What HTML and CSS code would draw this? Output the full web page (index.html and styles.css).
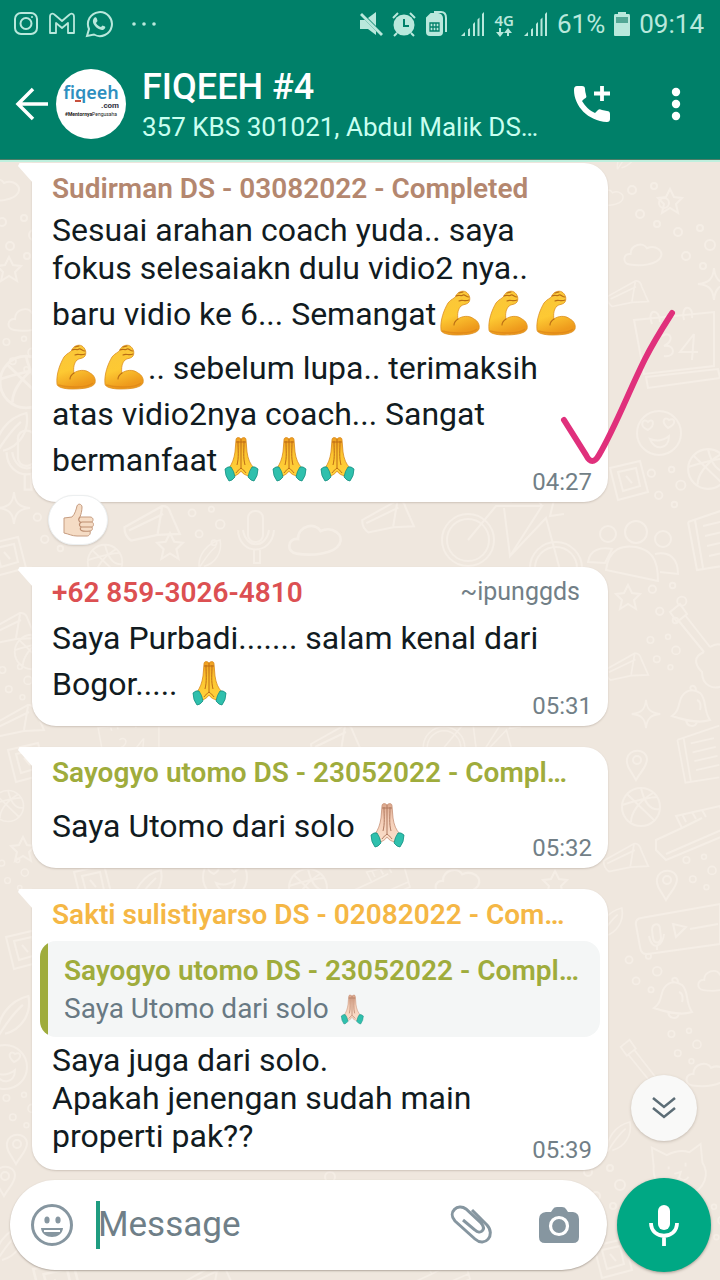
FILE: index.html
```html
<!DOCTYPE html>
<html lang="id">
<head>
<meta charset="utf-8">
<meta name="viewport" content="width=device-width, initial-scale=1">
<title>FIQEEH #4</title>
<link rel="stylesheet" href="styles.css">
</head>
<body>
<svg class="defs" aria-hidden="true">
  <defs>
    <linearGradient id="skin" x1="0" y1="0" x2="0.3" y2="1"><stop offset="0" stop-color="#f9c63c"/><stop offset="0.6" stop-color="#fdc933"/><stop offset="1" stop-color="#ee9a1c"/></linearGradient>
    <linearGradient id="hand" x1="0" y1="0" x2="0" y2="1"><stop offset="0" stop-color="#ee9d20"/><stop offset="0.4" stop-color="#fcc42f"/><stop offset="1" stop-color="#ffd23c"/></linearGradient>
    <linearGradient id="pale" x1="0" y1="0" x2="0" y2="1"><stop offset="0" stop-color="#dba68b"/><stop offset="0.4" stop-color="#f4cdb6"/><stop offset="1" stop-color="#fbe0cc"/></linearGradient>
    <symbol id="arm" viewBox="0 0 48 54">
      <path d="M20 9C21 5 27 3 30 5C33 7 35 11 33 15C31 18 27 17 25 19C22 22 21 27 22 32C26 29 33 28 38 32C42 34 44 38 43 42C41 47 30 48 20 48C12 48 5 46 5 43C4 33 8 23 12 16C15 12 18 12 20 9Z" fill="url(#skin)" stroke="#dc8f22" stroke-width="0.8"/>
      <path d="M22 32C19 34 18 36 18 38M20 9C23 7 25 10 27 8M27 8C29 7 30 10 33 10M23 14C26 12 29 15 33 13M23 6L27 5" fill="none" stroke="#b96d15" stroke-width="1.1" stroke-linecap="round"/>
      <path d="M6 44C16 47 35 47 41 42" fill="none" stroke="#d98118" stroke-width="1.4" opacity="0.6"/>
    </symbol>
    <symbol id="pray-lines" viewBox="0 0 48 54">
      <path d="M24 6V35M21 8C21 18 22 24 20 32M27 8C27 18 26 24 28 32M19 9H29M24 35C22 37 20 38 19 40M24 35C26 37 28 38 29 40"/>
    </symbol>
    <symbol id="cuffs" viewBox="0 0 48 54">
      <path d="M8 36Q11 33 14 34Q17 38 18 44Q15 48 12 48Q8 43 8 36ZM41 36Q38 33 35 34Q32 38 31 44Q34 48 37 48Q41 43 41 36Z" fill="#2fc0ad" stroke="#168f82" stroke-width="0.8"/>
    </symbol>
    <symbol id="pray" viewBox="0 0 48 54">
      <path d="M24 6C22 4 19 4 19 7L18 19C17 26 15 31 12 35L17 43C20 42 22 41 24 38C26 41 28 42 32 43L37 35C33 31 31 26 30 19L29 7C29 4 26 4 24 6Z" fill="url(#hand)" stroke="#d98a1c" stroke-width="0.8"/>
      <use href="#pray-lines" fill="none" stroke="#bd6d17" stroke-width="1"/>
      <use href="#cuffs"/>
    </symbol>
    <symbol id="pray-pale" viewBox="0 0 48 54">
      <path d="M24 6C22 4 19 4 19 7L18 19C17 26 15 31 12 35L17 43C20 42 22 41 24 38C26 41 28 42 32 43L37 35C33 31 31 26 30 19L29 7C29 4 26 4 24 6Z" fill="url(#pale)" stroke="#c69277" stroke-width="0.8"/>
      <use href="#pray-lines" fill="none" stroke="#b07a60" stroke-width="1"/>
      <use href="#cuffs"/>
    </symbol>
    <symbol id="signal" viewBox="0 0 25 26">
      <path d="M1 25L5 21V25ZM8 18.500L10 17V25H8ZM13 13L15 11V25H13ZM17.500 8.500L19.500 6.500V25H17.500ZM22 3L24 1V25H22Z" fill="currentColor"/>
    </symbol>
    <symbol id="d-star" viewBox="-15 -15 30 30"><path d="M0-12L4-4L12-3L6 3L8 12L0 7L-8 12L-6 3L-12-3L-4-4Z"/></symbol>
    <symbol id="d-spark" viewBox="-18 -18 36 36"><path d="M0-16C1-5 5-1 16 0C5 1 1 5 0 16C-1 5-5 1-16 0C-5-1-1-5 0-16Z"/></symbol>
    <symbol id="d-cloud" viewBox="0 0 48 30"><path d="M8 26C0 25 1 14 9 15C9 5 22 2 26 9C35 5 44 12 40 19C36 26 20 28 8 26Z"/></symbol>
    <symbol id="d-bell" viewBox="0 0 46 48"><path d="M4 34C11 29 10 24 13 16C17 8 25 6 32 11C39 17 35 28 42 38C30 42 16 38 4 34ZM18 38C19 45 27 46 29 40M23 8C20 3 28 2 28 8M29 18C33 19 33 25 32 28"/></symbol>
    <symbol id="d-pin" viewBox="0 0 26 34"><path d="M12 32C7 23 2 18 3 11C5 0 22 0 23 11C23 19 17 23 12 32Z"/><circle cx="13" cy="12" r="4"/></symbol>
    <symbol id="d-bike" viewBox="0 0 150 80"><circle cx="30" cy="42" r="26"/><circle cx="30" cy="42" r="21"/><circle cx="118" cy="70" r="26"/><circle cx="118" cy="70" r="21"/><path d="M30 42L58 8H104L72 58L66 10M72 58L108 20L122 72M104 8L100 2H116L112 18L126 16M54 4H74"/></symbol>
    <symbol id="d-people" viewBox="0 0 94 64"><circle cx="49" cy="14" r="11"/><circle cx="21" cy="16" r="8"/><circle cx="76" cy="21" r="8"/><path d="M19 52C22 29 37 27 49 29C63 32 71 39 71 63ZM1 44C3 31 14 29 25 31L18 45ZM68 36C83 33 91 41 91 56L73 54"/></symbol>
    <symbol id="d-face" viewBox="0 0 50 50"><circle cx="25" cy="25" r="22"/><path d="M14 22C4 18 9 9 14 14C19 9 22 17 14 22ZM34 20C26 13 31 8 35 12C40 9 44 15 34 20ZM16 31C23 34 30 32 35 28C35 42 20 43 16 31Z"/></symbol>
    <symbol id="d-calendar" viewBox="0 0 92 92"><path d="M4 18L84 10L84 64L14 72ZM16 75L88 67L90 76L18 86ZM22 22C16 6 30 6 30 20M54 18C50 2 64 2 62 16M32 34C42 28 44 40 34 44C46 42 46 56 34 54M64 32L50 50H68M64 32L62 58"/></symbol>
    <symbol id="d-mic" viewBox="0 0 44 56"><rect x="14" y="3" width="15" height="31" rx="7"/><path d="M4 22C5 48 38 48 40 22M9 22C12 41 32 41 35 22M20 42V55H26V42"/></symbol>
    <symbol id="d-guitar" viewBox="0 0 60 90"><path d="M6 10L16 2L23 12L13 20ZM14 18L40 50M21 13L46 45M40 50C26 56 34 66 38 70C38 84 50 88 58 84M46 45C54 40 60 42 60 50"/></symbol>
    <symbol id="d-ball" viewBox="0 0 44 44"><circle cx="22" cy="22" r="19"/><path d="M8 9L36 36M34 8C20 16 12 28 12 37M3 20C15 16 32 12 38 12M22 3C25 16 31 26 41 24"/></symbol>
    <symbol id="d-shoe" viewBox="0 0 80 60"><path d="M4 36L30 24L24 12L68 2L76 30L14 56L4 46ZM14 50L74 24M30 24L50 14M30 10L34 18M40 8L44 15M50 6L54 13"/></symbol>
    <symbol id="d-audio" viewBox="0 -10 90 60"><path d="M4 15Q3 9 9 8L88-6V34L16 44Q9 45 8 37ZM20 20C20 13 28 12 28 19L29 28C28 34 22 34 21 28ZM17 26C20 42 31 36 32 24M25 35V40M41 14L54 17L44 27ZM58 19L86 14"/></symbol>
    <symbol id="d-cat" viewBox="0 0 70 64"><path d="M8 26L6 6L22 14C30 10 38 8 46 11L58 2L60 22C68 34 62 50 48 55C30 60 6 50 8 26ZM24 26V29M42 22V26M30 34L37 32L35 38M35 38C31 44 26 41 25 39M35 38C39 43 44 40 45 37"/></symbol>
    <symbol id="d-pencil" viewBox="0 0 56 40"><path d="M4 22L38 3Q44 2 46 10L54 28L34 29L10 34Q4 30 4 22ZM38 4L34 28M8 25L39 10"/></symbol>
    <symbol id="d-box" viewBox="0 0 46 46"><path d="M4 10L34 3L42 34L12 42ZM12 14L30 10L34 28L17 33ZM20 18L26 25"/></symbol>
    <symbol id="d-dots" viewBox="0 0 50 50"><circle cx="8" cy="10" r="4"/><circle cx="30" cy="6" r="3"/><circle cx="40" cy="23" r="5"/><circle cx="16" cy="34" r="4"/><circle cx="33" cy="44" r="3"/></symbol>
    <symbol id="d-leaf" viewBox="0 0 36 44"><path d="M4 40C2 24 14 8 31 4C34 20 25 34 10 38M4 40C12 27 19 18 26 12"/></symbol>
    <symbol id="d-keys" viewBox="0 0 50 74"><path d="M3 20L50 4M3 20L12 68L50 62M10 18L18 66M18 24L44 18M20 34L46 28M22 44L48 38M24 54L50 48"/></symbol>
  </defs>
</svg>

<header class="top">
  <div class="status">
    <div class="status-group status-apps">
      <svg width="26" height="26" viewBox="0 0 26 26" fill="none" stroke="currentColor" stroke-width="2"><rect x="2" y="2" width="22" height="21" rx="6"/><circle cx="13" cy="12.500" r="5.500"/><circle cx="19" cy="6" r="1" fill="currentColor" stroke="none"/></svg>
      <svg width="28" height="24" viewBox="0 0 28 24" fill="none" stroke="currentColor" stroke-width="1.800" stroke-linejoin="round"><path d="M2 5C2 1 5 1 7 3L14 9L21 3C23 1 26 1 26 5V21H20V11L14 16L8 11V21H2Z"/></svg>
      <svg width="28" height="28" viewBox="0 0 28 28" fill="none" stroke="currentColor" stroke-width="2"><path d="M2 26L4 19A12 12 0 1 1 9 24.500Z"/><path d="M9 8C10 7 11.500 7 12 9L12.500 11L11 13C12 15 14 16.500 16 17L17.500 15.500L20 16.500C21 18 19 20 17 20C12 19.500 7 14 8 10Z" fill="currentColor" stroke="none"/></svg>
      <svg class="more-dots" width="24" height="6" viewBox="0 0 24 6" fill="currentColor"><circle cx="2" cy="3" r="1.800"/><circle cx="12" cy="3" r="1.800"/><circle cx="22" cy="3" r="1.800"/></svg>
    </div>
    <div class="status-group">
      <svg width="24" height="26" viewBox="0 0 24 26" fill="currentColor"><path d="M1 9H6L17 20V24L9 18H1ZM9 7L17 1V15Z"/><path d="M2 3L23 24" stroke="currentColor" stroke-width="2.800"/></svg>
      <svg width="24" height="26" viewBox="0 0 24 26"><circle cx="12" cy="14" r="10.500" fill="currentColor"/><path d="M1 7L6 2M23 7L18 2M5 22L2 25M19 22L22 25" stroke="currentColor" stroke-width="2"/><path d="M12 8V15H17" fill="none" stroke="#008069" stroke-width="2"/></svg>
      <svg width="24" height="26" viewBox="0 0 24 26" fill="none" stroke="currentColor" stroke-width="2"><path d="M2 7L6 3H13C15 3 17 5 17 7V21C17 23 16 24 14 24H5C3 24 2 23 2 21Z" fill="currentColor"/><path d="M9 1H16C20 1 21 4 21 7V21"/><path d="M5 12H14V20H5ZM8 12V20M11 12V20M5 16H14" stroke="#008069" stroke-width="1.300"/></svg>
      <svg class="bars" width="25" height="26"><use href="#signal"/></svg>
      <span class="network"><span>4G</span><svg width="16" height="9" viewBox="0 0 16 9" fill="currentColor"><path d="M3 0H5V4H8L4 9L0 4H3ZM11 8V5H8L12 0L16 5H13V8Z"/></svg></span>
      <svg width="25" height="26"><use href="#signal"/></svg>
      <span class="status-text">61%</span>
      <svg width="16" height="26" viewBox="0 0 16 26"><path d="M4 1H12V3H15Q16 3 16 5V24Q16 25 15 25H1Q0 25 0 24V5Q0 3 1 3H4Z" fill="currentColor"/><path d="M2 6H14V12H2Z" fill="#52a795"/></svg>
      <span class="status-text">09:14</span>
    </div>
  </div>
  <div class="toolbar">
    <button class="icon-button" aria-label="Back"><svg width="34" height="34" viewBox="0 0 34 34" fill="none" stroke="#fff" stroke-width="3.500"><path d="M33 17H4M18 2L3 17L18 32"/></svg></button>
    <div class="avatar" aria-hidden="true"><div class="brand">fi<span>q</span>eeh</div><div class="domain">.com</div><div class="tagline"><b>#Mentornya</b>Pengusaha</div></div>
    <div class="chat-title"><h1>FIQEEH #4</h1><p>357 KBS 301021, Abdul Malik DS…</p></div>
    <button class="icon-button call" aria-label="Add call"><svg width="40" height="40" viewBox="0 0 40 40"><path d="M5 2H10C12 2 13 3 13 5C13 8 14 10 14 11C15 13 14 14 12 15L10 17C13 22 18 27 23 29L26 26C27 25 28 25 30 26L35 27C37 27 38 28 38 30V35C38 37 37 38 35 38C16 37 2 22 2 6C2 3 3 2 5 2Z" fill="#fff"/><path d="M30 2V17M22 9.500H38" stroke="#fff" stroke-width="3.800"/></svg></button>
    <button class="icon-button" aria-label="More options"><svg width="10" height="34" viewBox="0 0 10 34" fill="#fff"><circle cx="5" cy="5" r="4.200"/><circle cx="5" cy="17" r="4.200"/><circle cx="5" cy="29" r="4.200"/></svg></button>
  </div>
</header>

<main class="chat">
  <svg class="doodles" aria-hidden="true">
    <use href="#d-cloud" x="-22" y="12" width="48" height="30"/><use href="#d-dots" x="-6" y="50" width="50" height="50"/><use href="#d-star" x="-6" y="92" width="30" height="30"/><use href="#d-cloud" x="6" y="142" width="48" height="30"/><use href="#d-dots" x="0" y="172" width="40" height="40"/><use href="#d-ball" x="-4" y="190" width="60" height="60"/><use href="#d-leaf" x="-8" y="246" width="40" height="50"/><use href="#d-mic" x="2" y="264" width="50" height="66"/><use href="#d-spark" x="-4" y="328" width="36" height="36"/><use href="#d-dots" x="30" y="344" width="46" height="50"/><use href="#d-box" x="-16" y="372" width="46" height="46"/><use href="#d-ball" x="85" y="380" width="40" height="40"/>
    <use href="#d-pencil" x="120" y="340" width="62" height="46"/><use href="#d-star" x="154" y="368" width="32" height="32"/><use href="#d-dots" x="185" y="342" width="44" height="44"/><use href="#d-mic" x="234" y="346" width="44" height="56"/><use href="#d-cloud" x="286" y="354" width="64" height="46"/><use href="#d-pencil" x="358" y="334" width="58" height="44"/><use href="#d-bike" x="438" y="336" width="150" height="80"/><use href="#d-leaf" x="196" y="374" width="28" height="36"/>
    <use href="#d-leaf" x="612" y="-20" width="30" height="30"/><use href="#d-star" x="655" y="24" width="30" height="30"/><use href="#d-cloud" x="594" y="20" width="34" height="30"/><use href="#d-dots" x="624" y="18" width="50" height="50"/><use href="#d-cloud" x="622" y="76" width="46" height="32"/><use href="#d-dots" x="670" y="60" width="50" height="50"/><use href="#d-spark" x="696" y="104" width="36" height="36"/><use href="#d-pencil" x="604" y="112" width="46" height="42"/><use href="#d-calendar" x="630" y="140" width="92" height="92"/><use href="#d-face" x="634" y="246" width="50" height="50"/><use href="#d-ball" x="678" y="284" width="60" height="46"/><use href="#d-box" x="604" y="296" width="50" height="46"/><use href="#d-dots" x="644" y="302" width="46" height="46"/><use href="#d-people" x="587" y="356" width="94" height="64"/><use href="#d-keys" x="685" y="340" width="50" height="74"/>
    <use href="#d-star" x="613" y="420" width="30" height="30"/><use href="#d-dots" x="645" y="418" width="46" height="46"/><use href="#d-guitar" x="664" y="440" width="60" height="90"/><use href="#d-pencil" x="602" y="486" width="48" height="40"/><use href="#d-spark" x="630" y="536" width="32" height="32"/><use href="#d-bell" x="668" y="520" width="46" height="48"/><use href="#d-dots" x="644" y="470" width="40" height="40"/><use href="#d-pin" x="624" y="586" width="26" height="34"/><use href="#d-keys" x="674" y="560" width="46" height="66"/><use href="#d-ball" x="619" y="623" width="44" height="44"/><use href="#d-shoe" x="652" y="642" width="80" height="60"/><use href="#d-pencil" x="600" y="668" width="50" height="58"/><use href="#d-pin" x="654" y="706" width="26" height="34"/><use href="#d-dots" x="680" y="690" width="40" height="40"/><use href="#d-leaf" x="596" y="738" width="30" height="46"/><use href="#d-audio" x="632" y="738" width="90" height="60"/><use href="#d-dots" x="622" y="786" width="44" height="50"/><use href="#d-bell" x="650" y="812" width="46" height="48"/><use href="#d-cloud" x="696" y="796" width="44" height="44"/><use href="#d-dots" x="662" y="864" width="46" height="40"/><use href="#d-guitar" x="614" y="876" width="56" height="80"/><use href="#d-cloud" x="684" y="892" width="50" height="40"/><use href="#d-cat" x="646" y="980" width="66" height="60"/><use href="#d-leaf" x="604" y="950" width="30" height="50"/><use href="#d-dots" x="580" y="1000" width="50" height="50"/><use href="#d-box" x="590" y="1074" width="46" height="46"/><use href="#d-dots" x="690" y="1040" width="40" height="40"/>
    <use href="#d-pencil" x="-18" y="448" width="56" height="40"/><use href="#d-ball" x="12" y="470" width="40" height="40"/><use href="#d-dots" x="-4" y="500" width="40" height="40"/><use href="#d-pencil" x="-10" y="538" width="56" height="44"/><use href="#d-box" x="4" y="578" width="46" height="46"/><use href="#d-ball" x="-10" y="626" width="36" height="36"/><use href="#d-star" x="8" y="672" width="30" height="30"/><use href="#d-dots" x="-4" y="694" width="36" height="36"/><use href="#d-box" x="70" y="700" width="46" height="46"/><use href="#d-leaf" x="130" y="704" width="36" height="44"/><use href="#d-face" x="200" y="690" width="50" height="50"/><use href="#d-ball" x="286" y="704" width="44" height="44"/><use href="#d-shoe" x="340" y="700" width="80" height="50"/><use href="#d-cloud" x="430" y="702" width="60" height="34"/><use href="#d-star" x="540" y="706" width="30" height="30"/><use href="#d-calendar" x="90" y="552" width="80" height="70"/><use href="#d-pencil" x="300" y="560" width="70" height="40"/><use href="#d-bike" x="420" y="552" width="120" height="64"/>
    <use href="#d-box" x="2" y="760" width="46" height="56"/><use href="#d-leaf" x="-6" y="826" width="40" height="56"/><use href="#d-face" x="-20" y="880" width="50" height="50"/><use href="#d-dots" x="0" y="928" width="40" height="40"/><use href="#d-pin" x="4" y="970" width="26" height="34"/><use href="#d-pin" x="-8" y="1002" width="26" height="34"/><use href="#d-leaf" x="-8" y="1060" width="36" height="44"/><use href="#d-box" x="18" y="1094" width="80" height="60"/><use href="#d-pencil" x="180" y="1098" width="56" height="40"/><use href="#d-dots" x="290" y="992" width="50" height="50"/><use href="#d-shoe" x="400" y="1092" width="80" height="50"/>
  </svg>

  <section class="messages">
    <article class="bubble bubble-reacted">
      <header class="meta"><h2 class="name brown">Sudirman DS - 03082022 - Completed</h2></header>
      <div class="content content-near">
        <p>Sesuai arahan coach yuda.. saya fokus selesaiakn dulu vidio2 nya.. baru vidio ke 6... Semangat<svg class="emoji" role="img" aria-label="flexed arm"><use href="#arm"/></svg><svg class="emoji" role="img" aria-label="flexed arm"><use href="#arm"/></svg><svg class="emoji" role="img" aria-label="flexed arm"><use href="#arm"/></svg><svg class="emoji" role="img" aria-label="flexed arm"><use href="#arm"/></svg><svg class="emoji" role="img" aria-label="flexed arm"><use href="#arm"/></svg>.. sebelum lupa.. terimaksih atas vidio2nya coach... Sangat bermanfaat<svg class="emoji" role="img" aria-label="folded hands"><use href="#pray"/></svg><svg class="emoji" role="img" aria-label="folded hands"><use href="#pray"/></svg><svg class="emoji" role="img" aria-label="folded hands"><use href="#pray"/></svg></p>
        <time>04:27</time>
      </div>
      <button class="reaction" aria-label="Thumbs up reaction"><svg width="32" height="34" viewBox="0 0 32 34"><path d="M2 15L10 14C13 11 14 7 15 3C16 0 20 1 20 4C20 8 19 11 18 14H28C31 14 32 17 30 19C32 20 32 23 30 24C31 26 30 28 28 28C29 31 27 33 25 33H15C10 33 7 31 2 30Z" fill="#f5dcc5" stroke="#c69c80" stroke-width="1"/><path d="M18 14C15 17 18 20 20 19H30M19 19C16 22 18 24 20 24H30M19 24C17 27 19 29 28 28" fill="none" stroke="#bd8e71" stroke-width="1.200"/></svg></button>
    </article>

    <article class="bubble">
      <header class="meta"><h2 class="name red">+62 859-3026-4810</h2><span class="push-name">~ipunggds</span></header>
      <div class="content">
        <p>Saya Purbadi....... salam kenal dari Bogor..... <svg class="emoji" role="img" aria-label="folded hands"><use href="#pray"/></svg></p>
        <time>05:31</time>
      </div>
    </article>

    <article class="bubble">
      <header class="meta"><h2 class="name green">Sayogyo utomo DS - 23052022 - Compl…</h2></header>
      <div class="content">
        <p>Saya Utomo dari solo <svg class="emoji" role="img" aria-label="folded hands"><use href="#pray-pale"/></svg></p>
        <time>05:32</time>
      </div>
    </article>

    <article class="bubble">
      <header class="meta"><h2 class="name amber">Sakti sulistiyarso DS - 02082022 - Com…</h2></header>
      <blockquote class="quote">
        <h3 class="name green">Sayogyo utomo DS - 23052022 - Compl…</h3>
        <p>Saya Utomo dari solo <svg class="emoji-small" role="img" aria-label="folded hands"><use href="#pray-pale"/></svg></p>
      </blockquote>
      <div class="content content-near">
        <p>Saya juga dari solo.<br>Apakah jenengan sudah main<br>properti pak??</p>
        <time>05:39</time>
      </div>
    </article>
  </section>

  <svg class="tick" viewBox="0 0 120 160" aria-hidden="true"><path d="M7 111L29 146Q35 158 42 146C58 119 72 82 88 50C97 32 108 15 115 4" fill="none" stroke="#e0307c" stroke-width="6" stroke-linecap="round" stroke-linejoin="round"/></svg>

  <button class="jump" aria-label="Scroll to latest"><svg width="26" height="24" viewBox="0 0 26 24" fill="none" stroke="#5c6d76" stroke-width="2.500"><path d="M2 2L13 11L24 2M2 12L13 21L24 12"/></svg></button>

  <form class="composer">
    <div class="field">
      <button type="button" class="icon-button" aria-label="Emoji"><svg width="44" height="44" viewBox="0 0 44 44"><circle cx="22" cy="22" r="19.500" fill="none" stroke="#8696a0" stroke-width="3"/><ellipse cx="17" cy="17" rx="2.600" ry="3.500" fill="#8696a0"/><ellipse cx="28" cy="17" rx="2.600" ry="3.500" fill="#8696a0"/><path d="M11 25H33C32 37 12 37 11 25Z" fill="#8696a0"/><path d="M14 28H30" stroke="#fff" stroke-width="2"/></svg></button>
      <label class="entry"><span class="caret"></span><input type="text" placeholder="Message" aria-label="Message"></label>
      <button type="button" class="icon-button attach" aria-label="Attach"><svg width="44" height="44" viewBox="0 0 44 44" fill="none" stroke="#8696a0" stroke-width="3"><path d="M23 7L38 22C47 32 36 45 26 36L6 18C-2 9 9 0 17 6L32 20C38 27 31 32 26 27L14 17"/></svg></button>
      <button type="button" class="icon-button" aria-label="Camera"><svg width="40" height="38" viewBox="0 0 40 38"><path d="M7 6H12L14 3Q15 1 18 1H23Q26 1 27 3L29 6H34Q40 7 40 13V31Q40 37 34 37H6Q0 37 0 31V13Q0 7 7 6Z" fill="#8696a0"/><circle cx="20" cy="20" r="8.500" fill="none" stroke="#fff" stroke-width="3.200"/></svg></button>
    </div>
    <button type="button" class="record" aria-label="Record voice message"><svg width="32" height="42" viewBox="0 0 32 42"><rect x="10" y="1" width="12" height="25" rx="6" fill="#fff"/><path d="M3 19C3 36 29 36 29 19M16 31V42" fill="none" stroke="#fff" stroke-width="3.800"/></svg></button>
  </form>
</main>
</body>
</html>
```
FILE: styles.css
```css
* {
  box-sizing: border-box;
}

body {
  margin: 0;
  min-height: 100vh;
  display: flex;
  flex-direction: column;
  background: #efe7de;
  color: #111b21;
  font-family: Roboto, "Liberation Sans", sans-serif;
}

h1, h2, h3, p, blockquote {
  margin: 0;
}

button {
  padding: 0;
  border: 0;
  background: none;
  font: inherit;
}

svg {
  display: block;
  flex: none;
}

.defs {
  position: absolute;
  width: 0;
  height: 0;
}

/* Status bar and toolbar */

.top {
  background: #008069;
  color: #fff;
  border-bottom: 1px solid #4f7d68;
}

.status {
  display: flex;
  justify-content: space-between;
  align-items: center;
  height: 48px;
  padding: 0 16px 0 13px;
  color: #b9e8dc;
}

.status-group {
  display: flex;
  align-items: center;
  gap: 9px;
}

.more-dots {
  margin-left: 10px;
}

.bars {
  margin-left: 2px;
}

.network {
  display: flex;
  flex-direction: column;
  align-items: center;
  font-family: "Noto Sans", sans-serif;
  font-size: 15px;
  font-weight: 600;
  line-height: 16px;
}

.status-text {
  font-size: 26px;
  line-height: 32px;
}

.toolbar {
  display: flex;
  align-items: center;
  height: 111px;
  padding: 0 39px 0 15px;
}

.avatar {
  flex: none;
  width: 70px;
  height: 70px;
  margin: 0 16px 0 7px;
  padding: 13px 3px 0;
  border-radius: 50%;
  background: #fff;
  text-align: center;
}

.brand {
  color: #2e8fc0;
  font-family: "Noto Sans", sans-serif;
  font-size: 18px;
  font-weight: 600;
  line-height: 20px;
}

.brand span {
  text-decoration: underline 2px #c8503c;
}

.domain {
  padding-right: 4px;
  color: #334;
  font-size: 8px;
  font-weight: 700;
  line-height: 8px;
  text-align: right;
}

.tagline {
  color: #222;
  font-size: 5px;
  line-height: 8px;
  white-space: nowrap;
}

.chat-title {
  flex: 1;
  min-width: 0;
  padding-top: 3px;
}

.chat-title h1 {
  font-size: 36px;
  font-weight: 500;
  line-height: 44px;
}

.chat-title p {
  color: #c9fff0;
  font-size: 26px;
  line-height: 36px;
  white-space: nowrap;
}

.call {
  margin-right: 59px;
}

/* Conversation */

.chat {
  position: relative;
  flex: 1;
  display: flex;
  flex-direction: column;
  justify-content: space-between;
  border-top: 2px solid #bff0de;
  overflow: hidden;
}

.doodles {
  position: absolute;
  inset: 0;
  width: 100%;
  height: 100%;
  fill: none;
  stroke: #f5eee6;
  stroke-width: 2px;
}

.messages {
  position: relative;
  display: flex;
  flex-direction: column;
  gap: 21px;
  padding: 1px 112px 8px 32px;
}

.bubble {
  position: relative;
  padding: 8px 8px 6px;
  border-radius: 0 24px 24px 24px;
  background: #fff;
  box-shadow: 0 1px 2px #cdc3b9;
}

.bubble::before {
  content: "";
  position: absolute;
  top: 0;
  left: -14px;
  width: 15px;
  height: 20px;
  background: #fff;
  clip-path: polygon(10% 0, 100% 0, 100% 100%, 0 15%);
}

.bubble-reacted {
  margin-bottom: 44px;
}

.meta {
  display: flex;
  justify-content: space-between;
  padding: 0 20px 0 12px;
}

.name {
  font-size: 28px;
  font-weight: 600;
  line-height: 36px;
  white-space: nowrap;
}

.brown { color: #b4876f; }
.red { color: #dc5052; }
.green { color: #9fac3c; }
.amber { color: #f5b745; }

.push-name {
  color: #727f87;
  font-size: 25px;
  line-height: 34px;
}

.content {
  display: grid;
  margin-top: 8px;
  padding: 0 8px 0 12px;
}

.content-near {
  margin-top: 4px;
}

.content p,
.content time {
  grid-area: 1 / 1;
}

.content p {
  padding-bottom: 9px;
  font-size: 32px;
  line-height: 38px;
}

.content time {
  place-self: end;
  color: #727f87;
  font-size: 24px;
  line-height: 28px;
}

.emoji {
  display: inline-block;
  width: 48px;
  height: 54px;
  vertical-align: -16px;
}

.emoji-small {
  display: inline-block;
  width: 32px;
  height: 36px;
  vertical-align: -10px;
}

.quote {
  position: relative;
  height: 96px;
  margin-top: 8px;
  padding: 12px 16px 12px 24px;
  border-radius: 16px;
  background: #f4f6f6;
  overflow: hidden;
}

.quote::before {
  content: "";
  position: absolute;
  inset: 0 auto 0 0;
  width: 8px;
  background: #9fac3c;
}

.quote p {
  color: #687983;
  font-size: 28px;
  line-height: 40px;
}

.reaction {
  position: absolute;
  left: 16px;
  bottom: -43px;
  display: grid;
  place-items: center;
  width: 60px;
  height: 50px;
  border: 1px solid #eceff0;
  border-radius: 25px;
  background: #fff;
  box-shadow: 0 1px 2px #d2c9c0;
}

/* Marker stroke drawn over the first message */

.tick {
  position: absolute;
  top: 147px;
  right: 43px;
  width: 120px;
  height: 160px;
}

.jump {
  position: absolute;
  right: 23px;
  bottom: 140px;
  display: grid;
  place-items: center;
  width: 66px;
  height: 66px;
  border-radius: 50%;
  background: #f9f9f8;
  box-shadow: 0 1px 3px #c5bbb1;
}

/* Composer */

.composer {
  position: relative;
  display: flex;
  align-items: center;
  gap: 10px;
  padding: 0 9px 9px 10px;
}

.field {
  flex: 1;
  display: flex;
  align-items: center;
  min-width: 0;
  height: 90px;
  padding: 0 28px 0 20px;
  border-radius: 45px;
  background: #fff;
  box-shadow: 0 1px 2px #b0a69c;
}

.entry {
  flex: 1;
  display: flex;
  align-items: center;
  min-width: 0;
  margin-left: 22px;
}

.caret {
  flex: none;
  width: 4px;
  height: 48px;
  margin-right: -2px;
  background: #1f9c80;
}

.entry input {
  flex: 1;
  min-width: 0;
  width: 100%;
  padding: 0;
  border: 0;
  outline: 0;
  background: none;
  color: #111b21;
  font-family: inherit;
  font-size: 35px;
  line-height: 48px;
}

.entry input::placeholder {
  color: #6f7f88;
  opacity: 1;
}

.attach {
  margin-right: 46px;
}

.record {
  flex: none;
  display: grid;
  place-items: center;
  width: 94px;
  height: 94px;
  border-radius: 50%;
  background: #00a884;
  box-shadow: 0 1px 3px #a59c92;
}
```
